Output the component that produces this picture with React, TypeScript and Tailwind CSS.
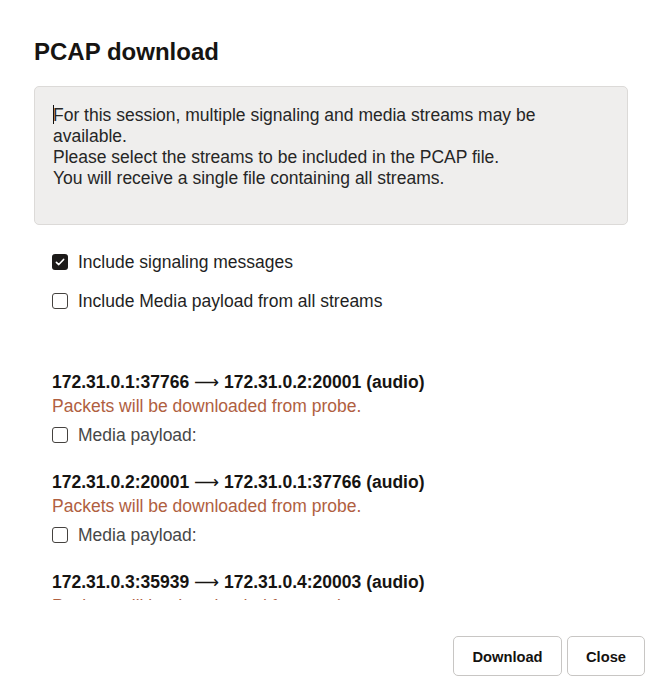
import { useState } from 'react'

type Stream = {
  from: string
  to: string
  kind: string
}

const STREAMS: Stream[] = [
  { from: '172.31.0.1:37766', to: '172.31.0.2:20001', kind: 'audio' },
  { from: '172.31.0.2:20001', to: '172.31.0.1:37766', kind: 'audio' },
  { from: '172.31.0.3:35939', to: '172.31.0.4:20003', kind: 'audio' },
  { from: '172.31.0.4:20003', to: '172.31.0.3:35939', kind: 'audio' },
]

function Checkbox({
  checked,
  onChange,
  label,
  muted = false,
}: {
  checked: boolean
  onChange: () => void
  label: string
  muted?: boolean
}) {
  return (
    <label className="flex h-[20px] cursor-pointer items-center gap-[10px]" onClick={onChange}>
      <span
        className={
          checked
            ? 'flex h-4 w-4 shrink-0 items-center justify-center rounded-[3px] bg-[#1c1a19]'
            : 'h-4 w-4 shrink-0 rounded-[3px] border border-[#45423f] bg-white'
        }
      >
        {checked && (
          <svg viewBox="0 0 16 16" className="h-3 w-3" fill="none">
            <path
              d="M3.2 8.4 6.4 11.4 12.8 4.6"
              stroke="white"
              strokeWidth="2.2"
              strokeLinecap="round"
              strokeLinejoin="round"
            />
          </svg>
        )}
      </span>
      <span className={muted ? 'text-[#474747]' : 'text-[#1f1f24]'}>{label}</span>
    </label>
  )
}

export default function App() {
  const [signaling, setSignaling] = useState(true)
  const [allMedia, setAllMedia] = useState(false)
  const [media, setMedia] = useState<boolean[]>(STREAMS.map(() => false))

  const toggleMedia = (i: number) =>
    setMedia((m) => m.map((v, j) => (j === i ? !v : v)))

  return (
    <div className="flex h-[688px] w-[654px] flex-col bg-white font-['Liberation_Sans',Arial,sans-serif] text-[17.5px] text-[#222]">
      <div className="pl-[34px] pr-[26px] pt-[38px]">
        <h1 className="text-[24px] font-bold leading-[28px] text-[#161412]">PCAP download</h1>

        <div className="mt-[20px] h-[139px] rounded-[5px] border border-[#dcdad8] bg-[#efeeed] pl-[18px] pr-[32px] pt-[18px] leading-[21px] text-[#262626]">
          <p>
            <span className="mr-[-1px] inline-block h-[19px] w-px bg-[#111] align-[-3px]" />
            For this session, multiple signaling and media streams may be available.
            <br />
            Please select the streams to be included in the PCAP file.
            <br />
            You will receive a single file containing all streams.
          </p>
        </div>
      </div>

      <div className="mt-[14px] h-[361px] overflow-hidden pl-[52px]">
        <div className="flex flex-col gap-[19px] pt-[13px]">
          <Checkbox
            checked={signaling}
            onChange={() => setSignaling((v) => !v)}
            label="Include signaling messages"
          />
          <Checkbox
            checked={allMedia}
            onChange={() => setAllMedia((v) => !v)}
            label="Include Media payload from all streams"
          />
        </div>

        <div className="mt-[59px] flex flex-col gap-[25px]">
          {STREAMS.map((s, i) => (
            <div key={i} className="flex flex-col">
              <div className="whitespace-nowrap font-bold leading-[24px] text-[#161412]">
                {s.from}{' '}
                <span className="font-['DejaVu_Sans',sans-serif] font-normal">⟶</span>{' '}
                {s.to} ({s.kind})
              </div>
              <div className="leading-[24px] text-[#b0603f]">
                Packets will be downloaded from probe.
              </div>
              <div className="mt-[7px]">
                <Checkbox
                  checked={media[i]}
                  onChange={() => toggleMedia(i)}
                  label="Media payload:"
                  muted
                />
              </div>
            </div>
          ))}
        </div>
      </div>

      <div className="mt-auto flex justify-end gap-[5px] pb-[12px] pr-[9px]">
        <button className="h-[40px] w-[109px] rounded-[5px] border border-[#c8c6c4] bg-white pt-[2px] text-[14.7px] font-bold text-[#141210]">
          Download
        </button>
        <button className="h-[40px] w-[78px] rounded-[5px] border border-[#c8c6c4] bg-white pt-[2px] text-[14.7px] font-bold text-[#141210]">
          Close
        </button>
      </div>
    </div>
  )
}
